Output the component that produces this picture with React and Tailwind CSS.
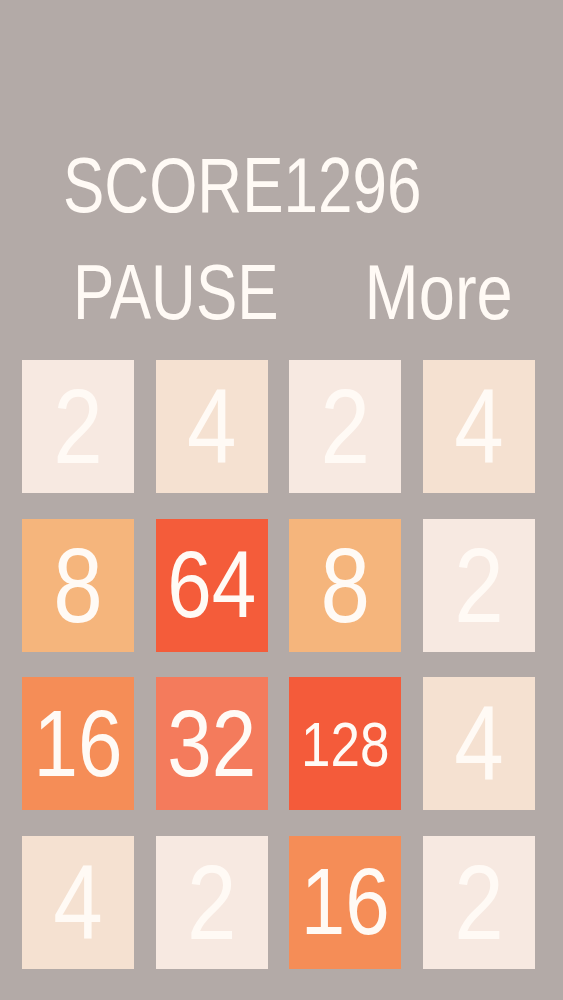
import React from "react";

const tiles = [
  [2, 4, 2, 4],
  [8, 64, 8, 2],
  [16, 32, 128, 4],
  [4, 2, 16, 2],
];

const bg = {
  2: "bg-[#f7e9e1]",
  4: "bg-[#f5e1d1]",
  8: "bg-[#f5b57c]",
  16: "bg-[#f58d57]",
  32: "bg-[#f47b5c]",
  64: "bg-[#f45c3a]",
  128: "bg-[#f45b3a]",
};

function sizeFor(v) {
  if (v >= 100) return "text-[53px]";
  if (v >= 10) return "text-[80px]";
  return "text-[89px]";
}

export default function App() {
  return (
    <div
      className="h-[1000px] w-full bg-[#b3aaa7] text-[#fffaf5] overflow-hidden"
      style={{ fontFamily: '"Liberation Sans", Arial, sans-serif' }}
    >
      <div className="pt-[155px] pl-[63px]">
        <div className="h-[62px] text-[62px] leading-[62px] whitespace-nowrap">
          <span className="inline-block scale-y-[1.26] origin-center">SCORE1296</span>
        </div>
      </div>
      <div className="mt-[45px] flex h-[62px] leading-[62px] whitespace-nowrap">
        <span className="ml-[73px] text-[62px] inline-block scale-y-[1.26] origin-center">PAUSE</span>
        <span className="ml-[86px] text-[65px] inline-block scale-y-[1.2] origin-center">More</span>
      </div>
      <div className="mt-[36px] ml-[22px] grid w-[513px] grid-cols-[112px_112px_112px_112px] grid-rows-[133px_133px_133px_133px] gap-x-[21.67px] gap-y-[25.67px]">
        {tiles.flat().map((v, i) => (
          <div key={i} className={`${bg[v]} flex items-center justify-center`}>
            <span className={`${sizeFor(v)} leading-none inline-block scale-y-[1.19]`}>{v}</span>
          </div>
        ))}
      </div>
    </div>
  );
}
